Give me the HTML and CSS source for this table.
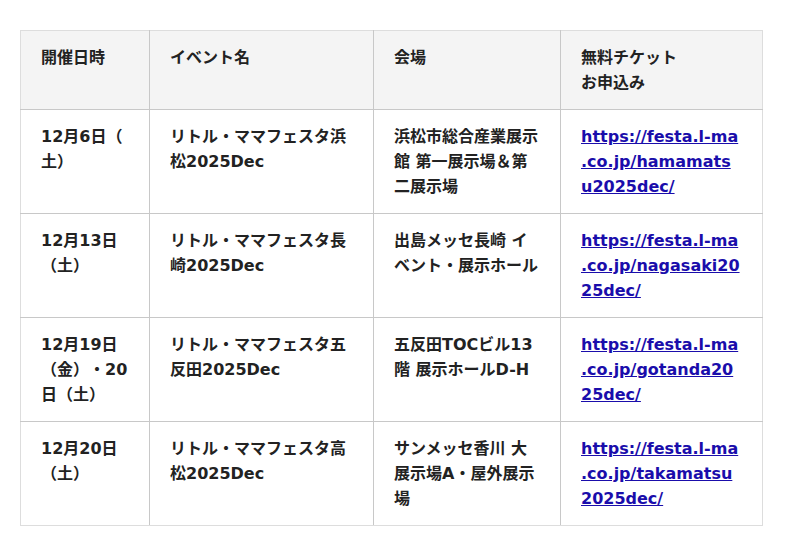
FILE: index.html
```html
<!DOCTYPE html>
<html lang="ja">
<head>
<meta charset="utf-8">
<title>イベント一覧</title>
<link rel="stylesheet" href="styles.css">
</head>
<body>
<div class="wrap">
<table class="events">
  <colgroup>
    <col class="c-date">
    <col class="c-name">
    <col class="c-venue">
    <col class="c-link">
  </colgroup>
  <thead>
    <tr>
      <th>開催日時</th>
      <th>イベント名</th>
      <th>会場</th>
      <th>無料チケット<br>お申込み</th>
    </tr>
  </thead>
  <tbody>
    <tr>
      <td>12月6日（土）</td>
      <td>リトル・ママフェスタ浜松2025Dec</td>
      <td>浜松市総合産業展示館 第一展示場＆第二展示場</td>
      <td><a href="#">https://festa.l-ma.co.jp/hamamatsu2025dec/</a></td>
    </tr>
    <tr>
      <td>12月13日（土）</td>
      <td>リトル・ママフェスタ長崎2025Dec</td>
      <td>出島メッセ長崎 イベント・展示ホール</td>
      <td><a href="#">https://festa.l-ma.co.jp/nagasaki2025dec/</a></td>
    </tr>
    <tr>
      <td>12月19日（金）・20日（土）</td>
      <td>リトル・ママフェスタ五反田2025Dec</td>
      <td>五反田TOCビル13階 展示ホールD-H</td>
      <td><a href="#">https://festa.l-ma.co.jp/gotanda2025dec/</a></td>
    </tr>
    <tr>
      <td>12月20日（土）</td>
      <td>リトル・ママフェスタ高松2025Dec</td>
      <td>サンメッセ香川 大展示場A・屋外展示場</td>
      <td><a href="#">https://festa.l-ma.co.jp/takamatsu2025dec/</a></td>
    </tr>
  </tbody>
</table>
</div>
</body>
</html>
```
FILE: styles.css
```css
html, body {
  margin: 0;
  padding: 0;
  background: #ffffff;
}
body {
  font-family: "DejaVu Sans", "Noto Sans CJK JP", sans-serif;
  font-weight: bold;
  font-size: 16px;
  line-height: 25px;
  color: #222222;
  text-spacing-trim: space-all;
}
.wrap {
  padding: 30px 20px;
}
.events {
  border-collapse: collapse;
  table-layout: fixed;
  width: 742px;
}
.c-date { width: 129px; }
.c-name { width: 224px; }
.c-venue { width: 187px; }
.c-link { width: 202px; }
.events th,
.events td {
  border: 1px solid #c8c8c8;
  padding: 14px 20px;
  text-align: left;
  vertical-align: top;
  font-weight: bold;
  word-break: break-all;
  line-break: anywhere;
  overflow-wrap: anywhere;
}
.events th {
  background: #f4f4f4;
}
.events thead th {
  border-top-color: #dddddd;
}
.events tr > :first-child {
  border-left-color: #dddddd;
}
.events tr > :last-child {
  border-right-color: #dddddd;
}
.events tbody tr:last-child td {
  border-bottom-color: #dddddd;
}
.events a {
  color: #1a0dab;
  text-decoration: underline;
}
```
